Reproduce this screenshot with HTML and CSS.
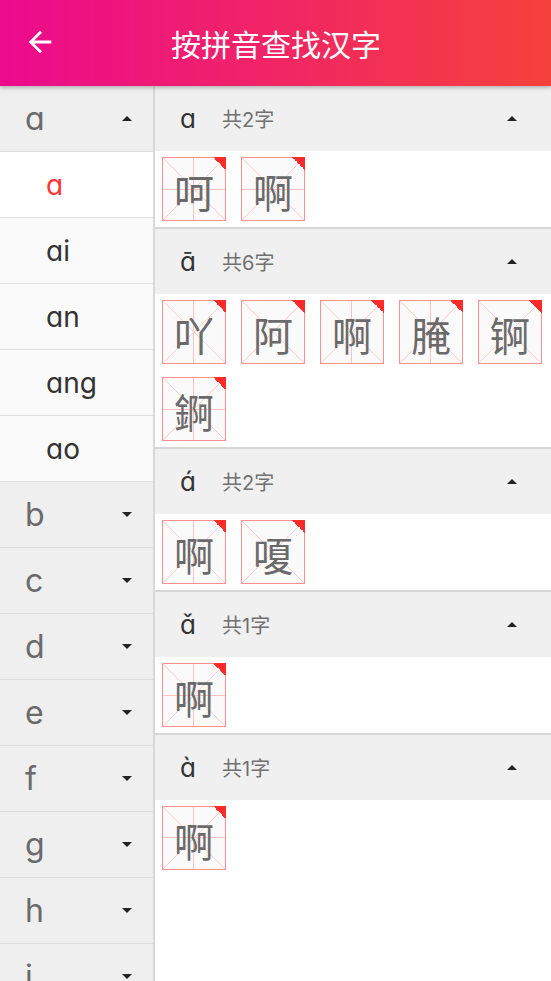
FILE: index.html
```html
<!DOCTYPE html>
<html>

<head>
    <title>按拼音查找汉字</title>
    <meta name="viewport" content="width=device-width, initial-scale=1.0">
    <link rel="stylesheet" href="styles.css">
</head>

<body>
    <div class="app-bar">
        <svg class="back" viewBox="0 0 24 24" width="34" height="34">
            <path d="M20 11H7.83l5.59-5.59L12 4l-8 8 8 8 1.41-1.41L7.83 13H20v-2z" fill="#fff"/>
        </svg>
        <div class="title">按拼音查找汉字</div>
    </div>

    <div class="main">
        <div class="side">
            <div class="letter open">a<span class="tri up"></span></div>
            <div class="syl active">a</div>
            <div class="syl">ai</div>
            <div class="syl">an</div>
            <div class="syl">ang</div>
            <div class="syl">ao</div>
            <div class="letter">b<span class="tri"></span></div>
            <div class="letter">c<span class="tri"></span></div>
            <div class="letter">d<span class="tri"></span></div>
            <div class="letter">e<span class="tri"></span></div>
            <div class="letter">f<span class="tri"></span></div>
            <div class="letter">g<span class="tri"></span></div>
            <div class="letter">h<span class="tri"></span></div>
            <div class="letter">i<span class="tri"></span></div>
        </div>

        <div class="content">
            <div class="group">
                <div class="group-head"><span class="py">a</span><span class="count">共2字</span><span class="tri up"></span></div>
                <div class="chars">
                    <div class="tile">呵</div>
                    <div class="tile">啊</div>
                </div>
            </div>
            <div class="group">
                <div class="group-head"><span class="py">ā</span><span class="count">共6字</span><span class="tri up"></span></div>
                <div class="chars">
                    <div class="tile">吖</div>
                    <div class="tile">阿</div>
                    <div class="tile">啊</div>
                    <div class="tile">腌</div>
                    <div class="tile">锕</div>
                    <div class="tile">錒</div>
                </div>
            </div>
            <div class="group">
                <div class="group-head"><span class="py">á</span><span class="count">共2字</span><span class="tri up"></span></div>
                <div class="chars">
                    <div class="tile">啊</div>
                    <div class="tile">嗄</div>
                </div>
            </div>
            <div class="group">
                <div class="group-head"><span class="py">ǎ</span><span class="count">共1字</span><span class="tri up"></span></div>
                <div class="chars">
                    <div class="tile">啊</div>
                </div>
            </div>
            <div class="group last">
                <div class="group-head"><span class="py">à</span><span class="count">共1字</span><span class="tri up"></span></div>
                <div class="chars">
                    <div class="tile">啊</div>
                </div>
            </div>
        </div>
    </div>
</body>

</html>
```

FILE: styles.css
```css
* {
    box-sizing: border-box;
    margin: 0;
    padding: 0;
}

body {
    font-family: Inter, "Noto Sans CJK SC", sans-serif;
    font-feature-settings: "cv11";
    background: #fff;
    width: 551px;
    height: 981px;
    overflow: hidden;
}

.app-bar {
    position: relative;
    z-index: 2;
    height: 86px;
    background: linear-gradient(to right, #ec0a8e, #f5413b);
    box-shadow: 0 2px 4px rgba(0, 0, 0, 0.25);
    display: flex;
    align-items: center;
    justify-content: center;
}

.back {
    position: absolute;
    left: 23px;
    top: 25px;
}

.title {
    color: #fff;
    font-family: "Noto Sans CJK SC", sans-serif;
    font-size: 30px;
    margin-left: 1px;
}

.main {
    display: flex;
    height: 895px;
}

.side {
    width: 155px;
    border-right: 2px solid #d8d8d8;
    flex-shrink: 0;
}

.letter {
    height: 66px;
    border-bottom: 1px solid #dcdcdc;
    background: #efefef;
    color: #6a6a6a;
    font-size: 32px;
    padding-left: 25px;
    padding-right: 21px;
    display: flex;
    align-items: center;
    justify-content: space-between;
}

.syl {
    height: 66px;
    border-bottom: 1px solid #e0e0e0;
    background: #fafafa;
    color: #333;
    font-size: 28px;
    padding-left: 46px;
    display: flex;
    align-items: center;
}

.syl.active {
    background: #fff;
    color: #ff3535;
}

.tri {
    width: 0;
    height: 0;
    border-left: 5px solid transparent;
    border-right: 5px solid transparent;
    border-top: 5px solid #222;
}

.tri.up {
    border-top: none;
    border-bottom: 5px solid #222;
}

.content {
    flex: 1;
}

.group {
    border-bottom: 2px solid #d6d6d6;
}

.group.last {
    border-bottom: none;
}

.group-head {
    height: 65px;
    background: #f0f0f0;
    display: flex;
    align-items: center;
    padding-left: 25px;
    padding-right: 34px;
}

.py {
    font-size: 26px;
    color: #333;
    width: 42px;
}

.count {
    font-family: Inter, "Noto Sans CJK SC", sans-serif;
    font-size: 20px;
    color: #707070;
    flex: 1;
}

.chars {
    display: flex;
    flex-wrap: wrap;
    gap: 13px 15px;
    padding: 6px 0 6px 7px;
}

.tile {
    position: relative;
    width: 64px;
    height: 64px;
    border: 1px solid #ff9090;
    background-color: #fafafa;
    background-image:
        linear-gradient(to right, transparent calc(50% - 0.5px), #ffc0c0 calc(50% - 0.5px), #ffc0c0 calc(50% + 0.5px), transparent calc(50% + 0.5px)),
        linear-gradient(to bottom, transparent calc(50% - 0.5px), #ffc0c0 calc(50% - 0.5px), #ffc0c0 calc(50% + 0.5px), transparent calc(50% + 0.5px)),
        linear-gradient(to top right, transparent calc(50% - 0.7px), #ffcccc 50%, transparent calc(50% + 0.7px)),
        linear-gradient(to bottom right, transparent calc(50% - 0.7px), #ffcccc 50%, transparent calc(50% + 0.7px));
    color: #6a6a6a;
    font-family: "Noto Sans CJK SC", sans-serif;
    font-size: 40px;
    line-height: 62px;
    text-align: center;
    padding-top: 2px;
}

.tile::after {
    content: "";
    position: absolute;
    top: -1px;
    right: -1px;
    width: 13px;
    height: 13px;
    background: linear-gradient(to bottom left, #ff2b2b 50%, transparent 50%);
}
```
